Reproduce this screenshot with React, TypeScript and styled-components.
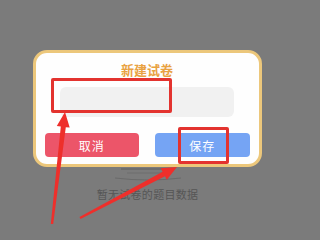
import { FC } from 'react';
import styled, { createGlobalStyle } from 'styled-components';

const GlobalStyle = createGlobalStyle`
    html, body {
        margin: 0;
        padding: 0;
        background: #7b7b7b;
        font-family: "Noto Sans CJK SC", "Noto Sans", sans-serif;
    }
`;

const Page = styled.div`
    position: relative;
    width: 293px;
    height: 229px;
    overflow: hidden;
    background: #7b7b7b;
`;

// page content lying under the dimmed overlay
const EmptyState = styled.div`
    display: flex;
    flex-direction: column;
    align-items: center;
    padding-top: 163px;
    padding-left: 2px;
`;

const EmptyText = styled.div`
    margin-top: 4px;
    font-size: 11px;
    line-height: 14px;
    color: #565656;
    letter-spacing: 0.3px;
`;

const Overlay = styled.div`
    position: absolute;
    inset: 0;
    display: flex;
    justify-content: center;
    padding-top: 50px;
    padding-left: 1px;
`;

const Dialog = styled.div`
    box-sizing: border-box;
    width: 229px;
    height: 117px;
    display: flex;
    flex-direction: column;
    align-items: center;
    padding: 9px 9px 0;
    background: #fefefe;
    border: 3px solid #ecc77b;
    border-radius: 14px;
`;

const Title = styled.div`
    font-size: 13px;
    line-height: 16px;
    font-weight: 700;
    color: #e9a242;
`;

const Input = styled.div`
    width: 174px;
    height: 30px;
    margin-top: 9px;
    background: #f1f1f1;
    border-radius: 6px;
`;

const ButtonRow = styled.div`
    display: flex;
    gap: 16px;
    width: 100%;
    margin-top: 16px;
`;

const Button = styled.div<{ $color: string }>`
    flex: 1;
    height: 24px;
    display: flex;
    align-items: center;
    justify-content: center;
    border-radius: 4px;
    background: ${p => p.$color};
    color: #fff;
    font-size: 12px;
    letter-spacing: 1px;
`;

// red annotation marks drawn over the screenshot
const Mark = styled.div<{ $x: number; $y: number; $w: number; $h: number }>`
    position: absolute;
    box-sizing: border-box;
    left: ${p => p.$x}px;
    top: ${p => p.$y}px;
    width: ${p => p.$w}px;
    height: ${p => p.$h}px;
    border: 3px solid #e3332f;
    border-radius: 2px;
`;

const Arrows = styled.svg`
    position: absolute;
    left: 0;
    top: 0;
`;

const App: FC = () => {
    return (
        <Page>
            <GlobalStyle />
            <EmptyState>
                <svg width="70" height="20" viewBox="0 0 70 20">
                    <path d="M8 6 H62" stroke="#686868" strokeWidth="1.5" />
                    <path d="M14 10 H56" stroke="#6e6e6e" strokeWidth="1" />
                    <path d="M2 15 Q35 19 68 15" stroke="#6a6a6a" strokeWidth="1.2" fill="none" />
                </svg>
                <EmptyText>暂无试卷的题目数据</EmptyText>
            </EmptyState>

            <Overlay>
                <Dialog>
                    <Title>新建试卷</Title>
                    <Input />
                    <ButtonRow>
                        <Button $color="#ec5569">取消</Button>
                        <Button $color="#75a4f4">保存</Button>
                    </ButtonRow>
                </Dialog>
            </Overlay>

            <Mark $x={51} $y={78} $w={121} $h={35} />
            <Mark $x={178} $y={127} $w={51} $h={37} />

            <Arrows width="293" height="229" viewBox="0 0 293 229">
                <polygon
                    fill="#ee2f2b"
                    points="65,112 69.7,127.6 65.8,127.2 53.2,224.1 50.8,223.9 60.8,126.6 56.8,126.1"
                />
                <polygon
                    fill="#ee2f2b"
                    points="177,167 166.8,179.8 165.0,176.3 80.5,219.1 79.5,216.9 162.6,171.7 160.6,168.2"
                />
            </Arrows>
        </Page>
    );
};

export default App;
